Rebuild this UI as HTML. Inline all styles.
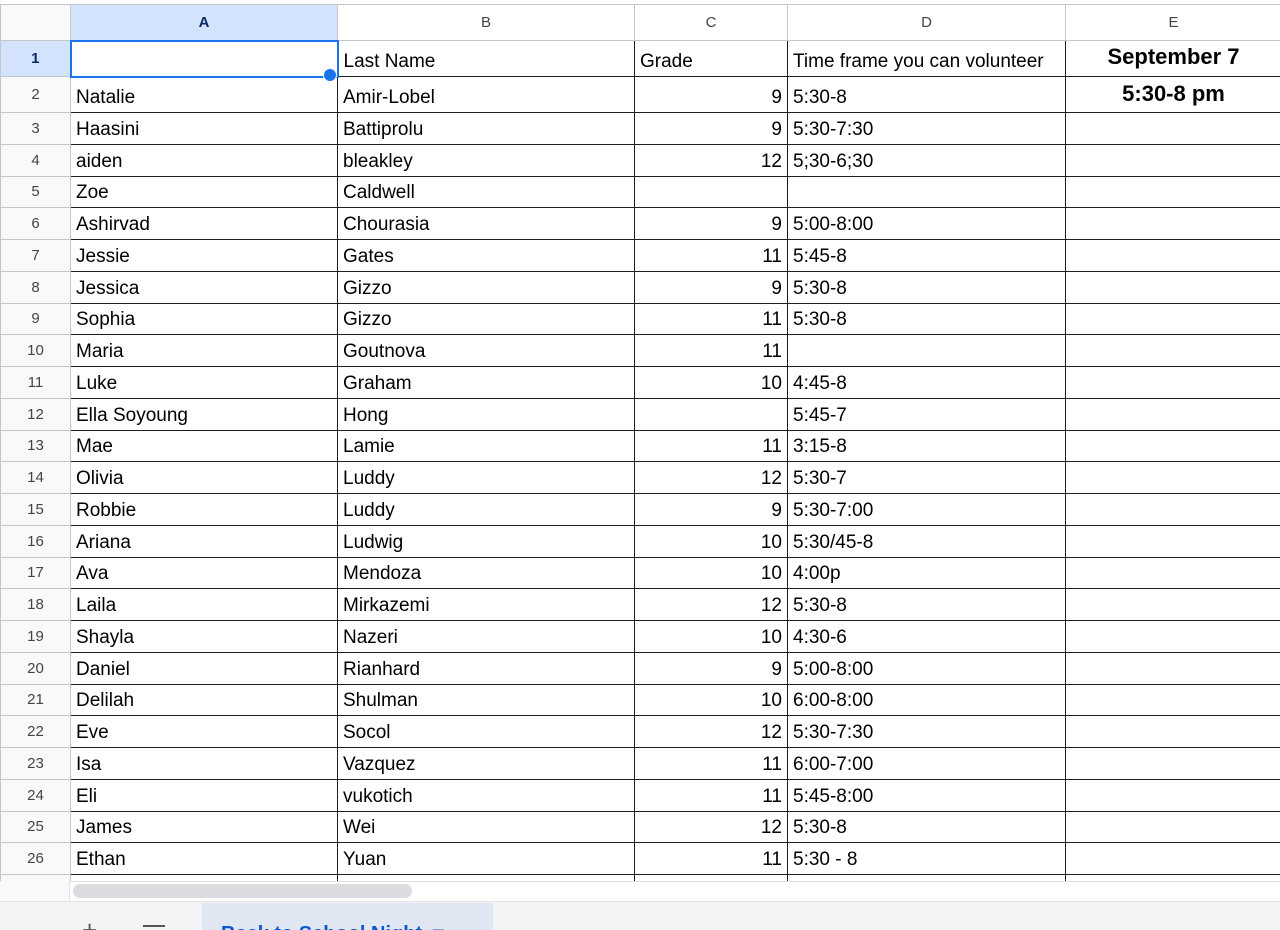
<!DOCTYPE html>
<html><head><meta charset="utf-8"><style>
html,body{margin:0;width:1280px;height:930px;overflow:hidden}
body{background:#fff;font-family:"Liberation Sans",Arial,sans-serif;position:relative}
table{position:absolute;left:0;top:4px;border-collapse:collapse;table-layout:fixed;width:1281px}
td{padding:0 5px;font-size:19px;color:#000;white-space:nowrap;overflow:hidden;vertical-align:bottom;padding-bottom:3px;border:1px solid #1f1f1f;box-sizing:border-box}
td.h{background:#f8f9fa;border:1px solid #c4c7c5;color:#444;font-size:15px;text-align:center;vertical-align:middle;padding:0}
tr.ch td{background:#fff;border-color:#c4c7c5;color:#444;font-size:15px;text-align:center;vertical-align:middle;padding:0}
tr.ch td.sel{background:#d3e3fd;color:#0b2a60;font-weight:bold}
td.hs{background:#d3e3fd;color:#0b2a60;font-weight:bold}
td.n{text-align:right}
td.e{text-align:center;font-weight:bold;font-size:22px}
tr.r td{height:31.75px}
</style></head><body>
<div style="position:absolute;left:0;top:0;width:1280px;height:4px;background:#fff;border-bottom:1px solid #ddd"></div>
<table>
<colgroup><col style="width:70px"><col style="width:267px"><col style="width:297px"><col style="width:153px"><col style="width:278px"><col style="width:216px"></colgroup>
<tr class="ch" style="height:36px"><td style="background:#f8f9fa"></td><td class="sel">A</td><td>B</td><td>C</td><td>D</td><td>E</td></tr>
<tr style="height:36px"><td class="h hs">1</td><td style="border:2px solid #1a73e8"></td><td>Last Name</td><td>Grade</td><td>Time frame you can volunteer</td><td class="e" style="vertical-align:middle">September 7</td></tr>
<tr style="height:36px"><td class="h">2</td><td>Natalie</td><td>Amir-Lobel</td><td class="n">9</td><td>5:30-8</td><td class="e" style="vertical-align:top;padding-top:4px">5:30-8 pm</td></tr>
<tr class="r"><td class="h">3</td><td>Haasini</td><td>Battiprolu</td><td class="n">9</td><td>5:30-7:30</td><td></td></tr>
<tr class="r"><td class="h">4</td><td>aiden</td><td>bleakley</td><td class="n">12</td><td>5;30-6;30</td><td></td></tr>
<tr class="r"><td class="h">5</td><td>Zoe</td><td>Caldwell</td><td class="n"></td><td></td><td></td></tr>
<tr class="r"><td class="h">6</td><td>Ashirvad</td><td>Chourasia</td><td class="n">9</td><td>5:00-8:00</td><td></td></tr>
<tr class="r"><td class="h">7</td><td>Jessie</td><td>Gates</td><td class="n">11</td><td>5:45-8</td><td></td></tr>
<tr class="r"><td class="h">8</td><td>Jessica</td><td>Gizzo</td><td class="n">9</td><td>5:30-8</td><td></td></tr>
<tr class="r"><td class="h">9</td><td>Sophia</td><td>Gizzo</td><td class="n">11</td><td>5:30-8</td><td></td></tr>
<tr class="r"><td class="h">10</td><td>Maria</td><td>Goutnova</td><td class="n">11</td><td></td><td></td></tr>
<tr class="r"><td class="h">11</td><td>Luke</td><td>Graham</td><td class="n">10</td><td>4:45-8</td><td></td></tr>
<tr class="r"><td class="h">12</td><td>Ella Soyoung</td><td>Hong</td><td class="n"></td><td>5:45-7</td><td></td></tr>
<tr class="r"><td class="h">13</td><td>Mae</td><td>Lamie</td><td class="n">11</td><td>3:15-8</td><td></td></tr>
<tr class="r"><td class="h">14</td><td>Olivia</td><td>Luddy</td><td class="n">12</td><td>5:30-7</td><td></td></tr>
<tr class="r"><td class="h">15</td><td>Robbie</td><td>Luddy</td><td class="n">9</td><td>5:30-7:00</td><td></td></tr>
<tr class="r"><td class="h">16</td><td>Ariana</td><td>Ludwig</td><td class="n">10</td><td>5:30/45-8</td><td></td></tr>
<tr class="r"><td class="h">17</td><td>Ava</td><td>Mendoza</td><td class="n">10</td><td>4:00p</td><td></td></tr>
<tr class="r"><td class="h">18</td><td>Laila</td><td>Mirkazemi</td><td class="n">12</td><td>5:30-8</td><td></td></tr>
<tr class="r"><td class="h">19</td><td>Shayla</td><td>Nazeri</td><td class="n">10</td><td>4:30-6</td><td></td></tr>
<tr class="r"><td class="h">20</td><td>Daniel</td><td>Rianhard</td><td class="n">9</td><td>5:00-8:00</td><td></td></tr>
<tr class="r"><td class="h">21</td><td>Delilah</td><td>Shulman</td><td class="n">10</td><td>6:00-8:00</td><td></td></tr>
<tr class="r"><td class="h">22</td><td>Eve</td><td>Socol</td><td class="n">12</td><td>5:30-7:30</td><td></td></tr>
<tr class="r"><td class="h">23</td><td>Isa</td><td>Vazquez</td><td class="n">11</td><td>6:00-7:00</td><td></td></tr>
<tr class="r"><td class="h">24</td><td>Eli</td><td>vukotich</td><td class="n">11</td><td>5:45-8:00</td><td></td></tr>
<tr class="r"><td class="h">25</td><td>James</td><td>Wei</td><td class="n">12</td><td>5:30-8</td><td></td></tr>
<tr class="r"><td class="h">26</td><td>Ethan</td><td>Yuan</td><td class="n">11</td><td>5:30 - 8</td><td></td></tr>
<tr style="height:10px"><td class="h"></td><td></td><td></td><td></td><td></td><td></td></tr>
</table>
<div style="position:absolute;left:0;top:881px;width:1280px;height:21px;background:#fff;border-top:1px solid #e0e0e0"></div>
<div style="position:absolute;left:0;top:881px;width:69px;height:21px;background:#f8f9fa;border-right:1px solid #e0e0e0"></div>
<div style="position:absolute;left:73px;top:884px;width:339px;height:14px;background:#dadce0;border-radius:7px"></div>
<div style="position:absolute;left:0;top:901px;width:1280px;height:29px;background:#f3f4f6;border-top:1px solid #e3e3e3;overflow:hidden">
<div style="position:absolute;left:82px;top:18px;font-size:26px;color:#555;line-height:20px">+</div>
<div style="position:absolute;left:143px;top:23px;width:22px;height:2px;background:#555"></div>
<div style="position:absolute;left:202px;top:1px;width:291px;height:28px;background:#e1e7f2"></div>
<div style="position:absolute;left:221px;top:19px;font-size:20px;font-weight:bold;color:#0b57d0;white-space:nowrap">Back to School Night &nbsp;▾</div>
</div>
<div style="position:absolute;left:323px;top:68px;width:12px;height:12px;border-radius:50%;background:#1a73e8;border:1px solid #fff"></div>
</body></html>
